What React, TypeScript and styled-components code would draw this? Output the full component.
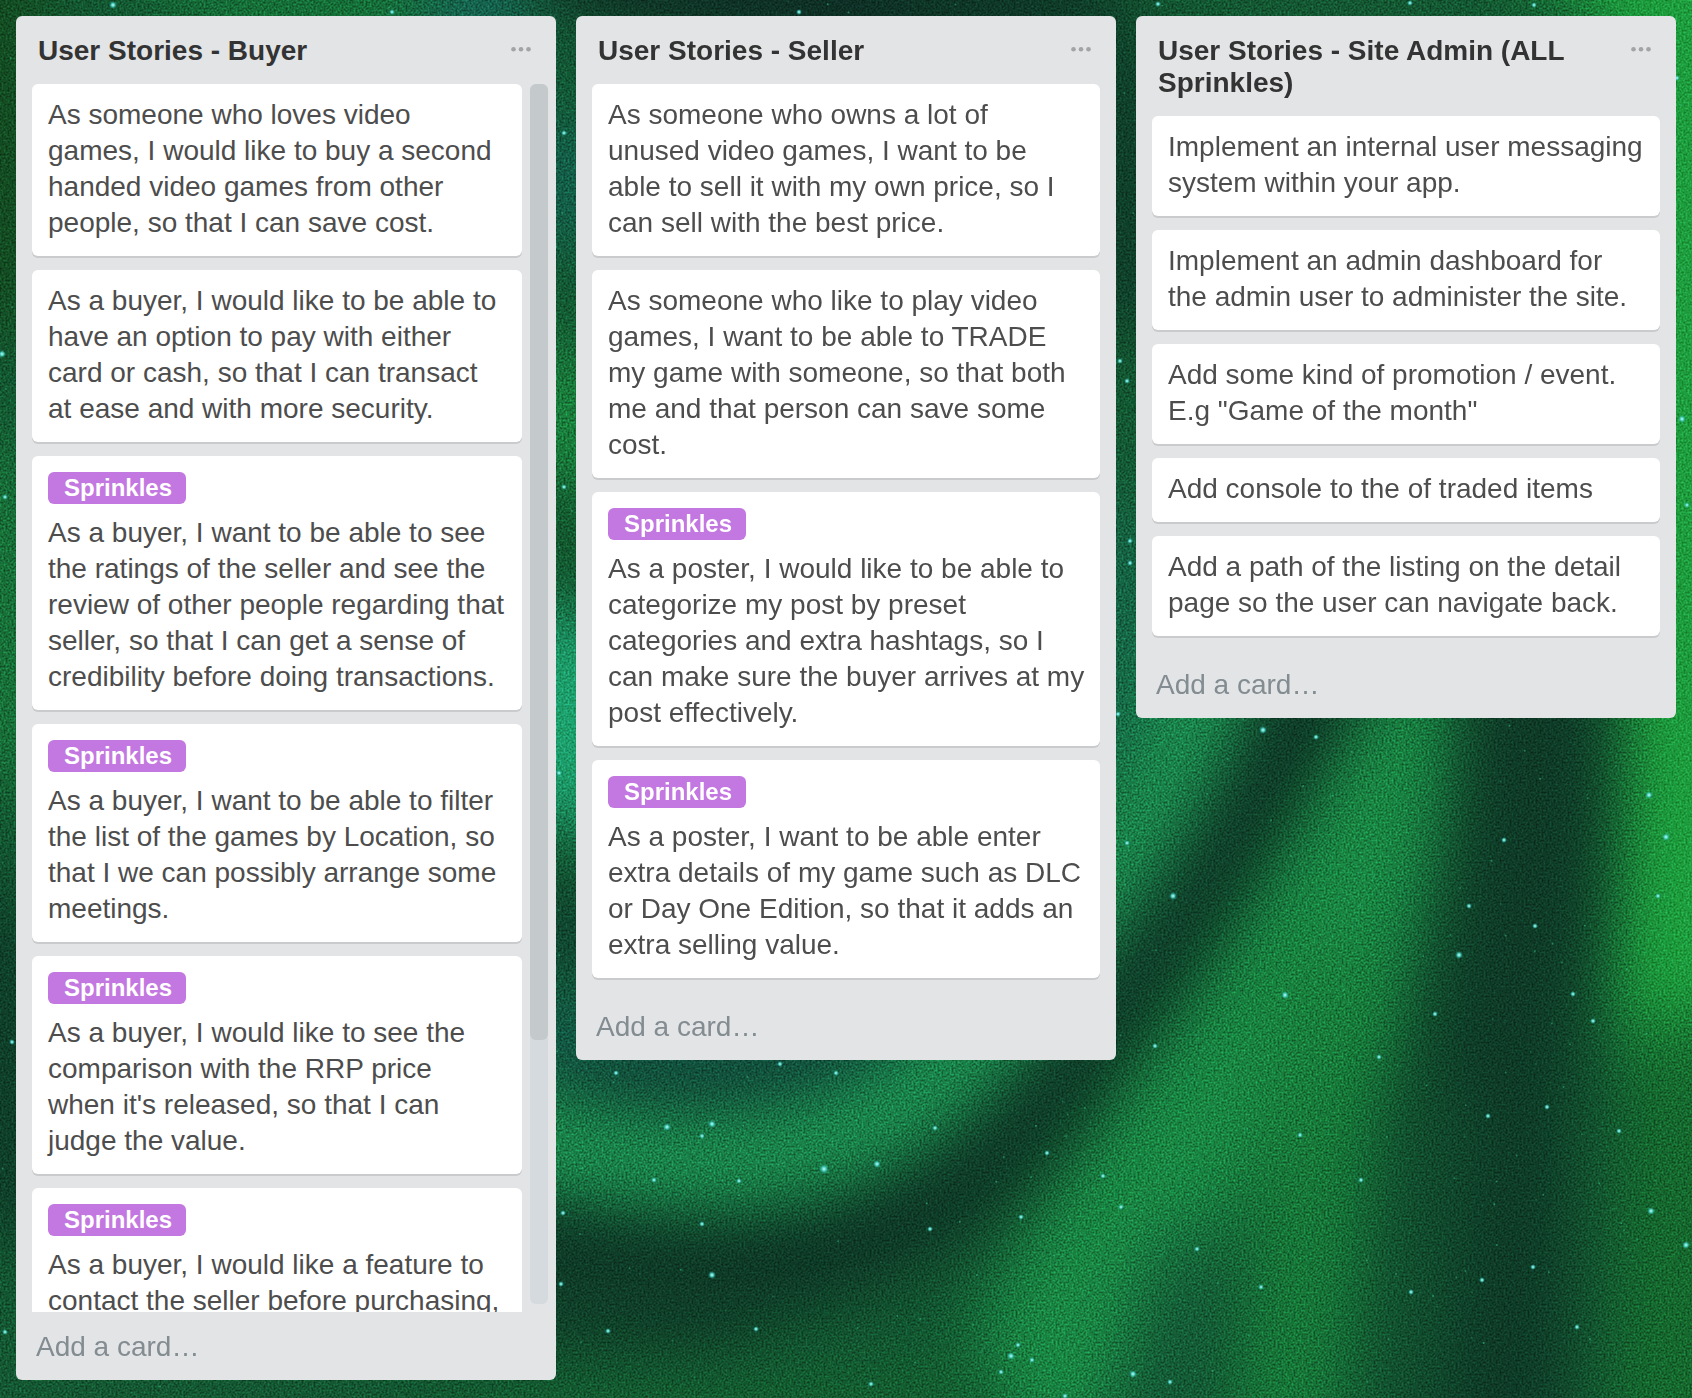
import React from "react";
import styled, { createGlobalStyle } from "styled-components";

const GlobalStyle = createGlobalStyle`
  *, *::before, *::after { box-sizing: border-box; }
  body {
    margin: 0;
    background: #12502e;
    font-family: "Liberation Sans", "Helvetica Neue", Helvetica, Arial, sans-serif;
    font-size: 28px;
    line-height: 36px;
    color: #4d4d4d;
  }
`;

const Sky = styled.svg`
  position: fixed;
  inset: 0;
  width: 100%;
  height: 100%;
  z-index: -1;
`;

const Grain = styled.rect`
  mix-blend-mode: overlay;
`;

const Board = styled.main`
  display: grid;
  grid-template-columns: repeat(3, minmax(400px, 1fr));
  align-items: start;
  gap: 20px;
  min-height: 100vh;
  padding: 16px 16px 18px;
`;

const List = styled.section`
  display: flex;
  flex-direction: column;
  max-height: calc(100vh - 34px);
  border-radius: 6px;
  background: #e2e4e6;
`;

const ListHeader = styled.header`
  display: flex;
  align-items: flex-start;
  justify-content: space-between;
  gap: 12px;
  padding: 19px 20px 17px 22px;
`;

const ListTitle = styled.h2`
  margin: 0;
  font-size: 28px;
  line-height: 32px;
  font-weight: 700;
  color: #333;
`;

const MenuButton = styled.button`
  display: flex;
  flex: none;
  padding: 0;
  border: 0;
  background: none;
  color: #a2a4a6;
  cursor: pointer;
`;

const ListBody = styled.div`
  display: flex;
  flex: 0 1 auto;
  min-height: 0;
  gap: 8px;
  padding: 0 ${(p: { $scroll: boolean }) => (p.$scroll ? 8 : 16)}px 0 16px;
`;

const Cards = styled.ul`
  display: flex;
  flex: 1;
  flex-direction: column;
  gap: 14px;
  min-width: 0;
  margin: 0;
  padding: 0 0 14px;
  list-style: none;
  overflow-y: auto;
  scrollbar-width: none;
`;

const CardItem = styled.li`
  flex: none;
  padding: ${(p: { $labelled: boolean }) => (p.$labelled ? 16 : 13)}px 12px 15px 16px;
  border-radius: 6px;
  background: #fff;
  box-shadow: 0 2px 0 #c9cbcd;
`;

const Label = styled.span`
  display: block;
  width: fit-content;
  margin-bottom: 11px;
  padding: 0 14px 0 16px;
  border-radius: 6px;
  background: #c377e0;
  color: #fff;
  font-size: 24px;
  line-height: 32px;
  font-weight: 700;
`;

const CardText = styled.p`
  margin: 0;
  white-space: pre-line;
`;

const ScrollTrack = styled.div`
  flex: none;
  width: 18px;
  margin-bottom: 8px;
  border-radius: 6px;
  background: #d5dade;
`;

const ScrollThumb = styled.div`
  border-radius: 6px;
  background: #c4c9cc;
`;

const AddCard = styled.button`
  flex: none;
  padding: 17px 20px 15px;
  border: 0;
  background: none;
  color: #838c91;
  font: inherit;
  text-align: left;
  cursor: pointer;
`;

type CardData = { text: string; label?: string };
type ListData = { title: string; cards: CardData[]; scrolled?: number };

const lists: ListData[] = [
  {
    title: "User Stories - Buyer",
    scrolled: 0.784,
    cards: [
      { text: "As someone who loves video games, I would like to buy a second handed video games from other people, so that I can save cost." },
      { text: "As a buyer, I would like to be able to have an option to pay with either card or cash, so that I can transact\nat ease and with more security." },
      { label: "Sprinkles", text: "As a buyer, I want to be able to see the ratings of the seller and see the review of other people regarding that seller, so that I can get a sense of credibility before doing transactions." },
      { label: "Sprinkles", text: "As a buyer, I want to be able to filter the list of the games by Location, so that I we can possibly arrange some meetings." },
      { label: "Sprinkles", text: "As a buyer, I would like to see the comparison with the RRP price\nwhen it's released, so that I can\njudge the value." },
      { label: "Sprinkles", text: "As a buyer, I would like a feature to contact the seller before purchasing," },
    ],
  },
  {
    title: "User Stories - Seller",
    cards: [
      { text: "As someone who owns a lot of\nunused video games, I want to be\nable to sell it with my own price, so I can sell with the best price." },
      { text: "As someone who like to play video games, I want to be able to TRADE my game with someone, so that both me and that person can save some cost." },
      { label: "Sprinkles", text: "As a poster, I would like to be able to categorize my post by preset categories and extra hashtags, so I can make sure the buyer arrives at my post effectively." },
      { label: "Sprinkles", text: "As a poster, I want to be able enter extra details of my game such as DLC or Day One Edition, so that it adds an extra selling value." },
    ],
  },
  {
    title: "User Stories - Site Admin (ALL Sprinkles)",
    cards: [
      { text: "Implement an internal user messaging system within your app." },
      { text: "Implement an admin dashboard for the admin user to administer the site." },
      { text: 'Add some kind of promotion / event. E.g "Game of the month"' },
      { text: "Add console to the of traded items" },
      { text: "Add a path of the listing on the detail page so the user can navigate back." },
    ],
  },
];

// Aurora bands: path, colour, stroke width, opacity.
const bands: [string, string, number, number][] = [
  ["M-40 -60 L-20 260", "#144a1e", 160, 0.8],
  ["M260 -80 L330 20", "#17743a", 240, 0.9],
  ["M490 -60 L470 60", "#17695a", 110, 0.8],
  ["M620 -60 L980 20", "#0f2f26", 170, 0.95],
  ["M980 -60 L1150 240", "#0f3b29", 200, 0.8],
  ["M-40 520 L20 700", "#1a7a3c", 170, 0.8],
  ["M-40 960 L30 1160", "#0e3a28", 180, 0.8],
  ["M440 160 L660 200", "#146250", 130, 0.8],
  ["M440 380 L700 470", "#1c8840", 130, 0.9],
  ["M440 490 L700 590", "#14592d", 60, 0.8],
  ["M440 690 L720 760", "#1fa673", 200, 0.95],
  ["M450 910 L720 970", "#104030", 90, 0.8],
  ["M460 1040 L860 1050", "#15604e", 110, 0.8],
  ["M600 1090 C700 1110 800 1090 900 1020", "#114438", 90, 0.8],
  ["M1040 520 C1130 600 1140 660 1120 720", "#176a4c", 150, 0.8],
  ["M1710 -60 C1680 300 1700 600 1690 980", "#1fa040", 170, 1],
  ["M1570 -80 L1720 30", "#1fa040", 130, 0.9],
  ["M1700 1080 L1680 1480", "#17702f", 150, 0.8],
  ["M1390 640 C1400 860 1290 1010 1210 1110 C1150 1180 1100 1250 1060 1360", "#1b8a46", 170, 1],
  ["M1330 1000 L1290 1420", "#19803c", 130, 0.85],
  ["M1190 1270 L1160 1420", "#155a38", 80, 0.8],
  ["M1530 560 C1550 860 1510 960 1500 1100 C1490 1250 1510 1330 1480 1480", "#0f3c28", 150, 1],
  ["M1440 1130 L1400 1420", "#125030", 90, 0.6],
  ["M1340 640 C1270 760 1150 910 1060 1050 C980 1170 880 1260 740 1260 C660 1255 590 1240 480 1230", "#0f3827", 110, 1],
  ["M460 1290 C560 1310 640 1310 720 1310", "#103c28", 90, 0.8],
  ["M1210 660 C1180 790 1100 880 1020 990 C930 1110 840 1150 740 1158 C670 1165 610 1162 480 1130", "#1d9252", 84, 1],
  ["M480 1440 L960 1410", "#156431", 80, 0.9],
];

// Bright stars: x, y, radius.
const stars: [number, number, number][] = [
  [1263, 730, 3], [1173, 896, 3], [1459, 955, 3], [1285, 995, 3], [1649, 795, 3],
  [1666, 837, 3], [1658, 896, 2], [1504, 840, 2], [1535, 926, 2], [1547, 1107, 2],
  [1651, 1211, 3], [1686, 1245, 3], [1197, 1249, 2], [1300, 1135, 2], [1261, 1287, 2],
  [1133, 1374, 3], [1573, 994, 2], [1593, 1021, 2], [1488, 1116, 2], [1533, 1267, 2],
  [1482, 1280, 2], [1411, 1292, 2], [1469, 906, 2], [1619, 1131, 2], [1379, 1057, 2],
  [1155, 1046, 2], [1316, 737, 2], [1435, 1014, 2], [1361, 1180, 2], [1577, 1327, 2],
  [1170, 1382, 2], [824, 1169, 4], [667, 1127, 3], [712, 1124, 3], [702, 1136, 2],
  [877, 1164, 3], [935, 1128, 2], [712, 1275, 3], [1011, 1356, 3], [1032, 1360, 2],
  [1018, 1345, 2], [836, 1073, 2], [616, 1073, 2], [780, 1064, 2], [739, 1181, 2],
  [654, 1180, 2], [1021, 1217, 2], [871, 1384, 2], [756, 1329, 2], [608, 1331, 2],
  [1047, 1153, 2], [1103, 1176, 2], [930, 1229, 2], [1001, 1372, 2], [563, 1213, 2],
  [702, 1224, 2], [1121, 1207, 2], [1065, 1396, 2], [2, 354, 3], [5, 497, 2],
  [12, 1042, 2], [5, 1332, 2], [564, 133, 2], [564, 487, 2], [561, 1284, 2],
  [559, 773, 2], [1120, 361, 2], [1130, 541, 2], [1130, 563, 2], [1127, 381, 2],
  [1127, 843, 2], [1118, 714, 2], [1682, 419, 3], [1677, 78, 2], [1687, 505, 2],
  [113, 5, 3], [392, 12, 2], [799, 12, 2], [1158, 4, 2], [1534, 5, 2], [1410, 3, 2],
];

// A fixed seed keeps the faint star dust the same on every render.
const dust = (() => {
  let seed = 7;
  const next = () => (seed = (seed * 16807) % 2147483647) / 2147483647;
  return Array.from({ length: 900 }, () => ({
    x: next() * 1692,
    y: next() * 1398,
    o: 0.15 + next() * 0.45,
  }));
})();

function Aurora() {
  return (
    <Sky viewBox="0 0 1692 1398" preserveAspectRatio="xMidYMid slice" aria-hidden="true">
      <defs>
        <filter
          id="soft"
          filterUnits="userSpaceOnUse"
          x="-200"
          y="-200"
          width="2092"
          height="1798"
          colorInterpolationFilters="sRGB"
        >
          <feGaussianBlur stdDeviation="34" />
        </filter>
        <filter id="grain" x="0" y="0" width="100%" height="100%" colorInterpolationFilters="sRGB">
          <feTurbulence type="fractalNoise" baseFrequency="0.5" numOctaves="2" seed="4" />
          <feColorMatrix values="1.6 0 0 0 -0.34  1.6 0 0 0 -0.34  1.6 0 0 0 -0.34  0 0 0 0 1" />
        </filter>
        <radialGradient id="star">
          <stop offset="0" stopColor="#c8fff6" />
          <stop offset="0.4" stopColor="#58dcd0" stopOpacity="0.9" />
          <stop offset="1" stopColor="#1c9a90" stopOpacity="0" />
        </radialGradient>
      </defs>
      <rect width="1692" height="1398" fill="#145a33" />
      {bands.map(([d, color, width, opacity], i) => (
        <path
          key={i}
          d={d}
          fill="none"
          stroke={color}
          strokeWidth={width}
          strokeLinecap="round"
          strokeLinejoin="round"
          opacity={opacity}
          filter="url(#soft)"
        />
      ))}
      <Grain width="1692" height="1398" filter="url(#grain)" opacity="0.4" />
      {dust.map((s, i) => (
        <circle key={i} cx={s.x} cy={s.y} r="1" fill="#3cc690" opacity={s.o} />
      ))}
      {stars.map(([x, y, r], i) => (
        <circle key={i} cx={x} cy={y} r={r + 1} fill="url(#star)" />
      ))}
    </Sky>
  );
}

function DotsIcon() {
  return (
    <svg width="30" height="32" viewBox="0 0 30 32" fill="currentColor" aria-hidden="true">
      <circle cx="7.5" cy="14.3" r="2.3" />
      <circle cx="15" cy="14.3" r="2.3" />
      <circle cx="22.5" cy="14.3" r="2.3" />
    </svg>
  );
}

function Card({ card }: { card: CardData }) {
  return (
    <CardItem $labelled={Boolean(card.label)}>
      {card.label && <Label>{card.label}</Label>}
      <CardText>{card.text}</CardText>
    </CardItem>
  );
}

function BoardList({ list }: { list: ListData }) {
  return (
    <List>
      <ListHeader>
        <ListTitle>{list.title}</ListTitle>
        <MenuButton type="button" aria-label="List actions">
          <DotsIcon />
        </MenuButton>
      </ListHeader>
      <ListBody $scroll={Boolean(list.scrolled)}>
        <Cards>
          {list.cards.map((card, i) => (
            <Card key={i} card={card} />
          ))}
        </Cards>
        {list.scrolled && (
          <ScrollTrack>
            <ScrollThumb style={{ height: `${list.scrolled * 100}%` }} />
          </ScrollTrack>
        )}
      </ListBody>
      <AddCard type="button">Add a card…</AddCard>
    </List>
  );
}

export default function App() {
  return (
    <>
      <GlobalStyle />
      <Aurora />
      <Board>
        {lists.map((list) => (
          <BoardList key={list.title} list={list} />
        ))}
      </Board>
    </>
  );
}
